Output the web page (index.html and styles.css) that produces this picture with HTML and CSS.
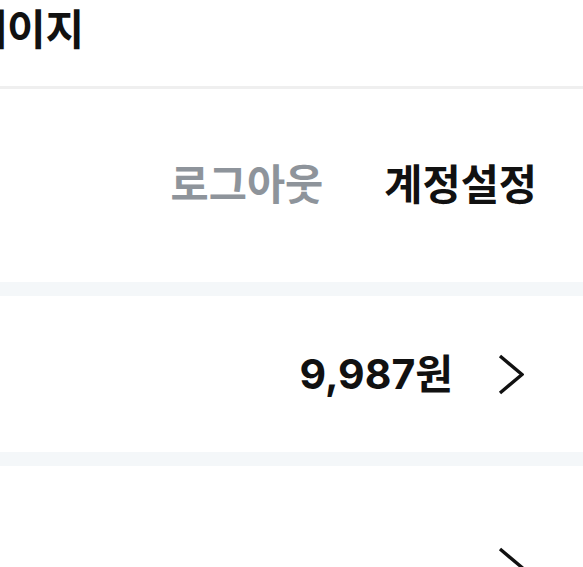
FILE: index.html
```html
<!DOCTYPE html>
<html lang="ko">
<head>
  <meta charset="UTF-8" />
  <meta name="viewport" content="width=device-width, initial-scale=1" />
  <title>마이페이지</title>
  <link rel="stylesheet" href="styles.css">
</head>
<body>

<header class="page-header">
  <h1 class="page-title">마이페이지</h1>
</header>

<!-- 계정 관련 버튼 -->
<section class="account-actions">
  <a href="#" class="action action-muted">로그아웃</a>
  <a href="#" class="action">계정설정</a>
</section>

<div class="section-gap"></div>

<!-- 포인트 -->
<a href="#" class="menu-row">
  <span class="menu-value">9,987원</span>
  <svg class="chevron" width="26" height="41" viewBox="0 0 26 41" aria-hidden="true">
    <polyline points="2,2 24,20.5 2,39" fill="none" stroke="#111" stroke-width="3.4" />
  </svg>
</a>

<div class="section-gap"></div>

<a href="#" class="menu-row menu-row-tall">
  <span class="menu-value"></span>
  <svg class="chevron" width="26" height="41" viewBox="0 0 26 41" aria-hidden="true">
    <polyline points="2,2 24,20.5 2,39" fill="none" stroke="#111" stroke-width="3.4" />
  </svg>
</a>

</body>
</html>
```

FILE: styles.css
```css
* {
  box-sizing: border-box;
}
body {
  margin: 0;
  background: #fff;
  color: #111;
  font-family: "Noto Sans CJK KR", "Noto Sans", sans-serif;
  overflow: hidden;
}
a {
  color: inherit;
  text-decoration: none;
}

.page-header {
  height: 89px;
  border-bottom: 3px solid #efefef;
  overflow: hidden;
}
.page-title {
  margin: 0 0 0 -109px;
  padding-top: 6px;
  font-size: 42px;
  line-height: 42px;
  font-weight: 700;
  white-space: nowrap;
}

.account-actions {
  height: 193px;
  display: flex;
  align-items: center;
  justify-content: flex-end;
  gap: 61px;
  padding-right: 46px;
}
.action {
  font-size: 41.5px;
  font-weight: 700;
  line-height: 1;
  margin-top: -6px;
}
.action-muted {
  color: #8e949b;
}

.section-gap {
  height: 14px;
  background: #f4f7f9;
}

.menu-row {
  height: 156px;
  display: flex;
  align-items: center;
  justify-content: flex-end;
  gap: 45px;
  padding-right: 59px;
}
.menu-row-tall {
  height: 203px;
}
.menu-value {
  font-family: Inter, "Noto Sans CJK KR", sans-serif;
  font-size: 41px;
  font-weight: 700;
  line-height: 1;
}
.chevron {
  flex-shrink: 0;
}
```
